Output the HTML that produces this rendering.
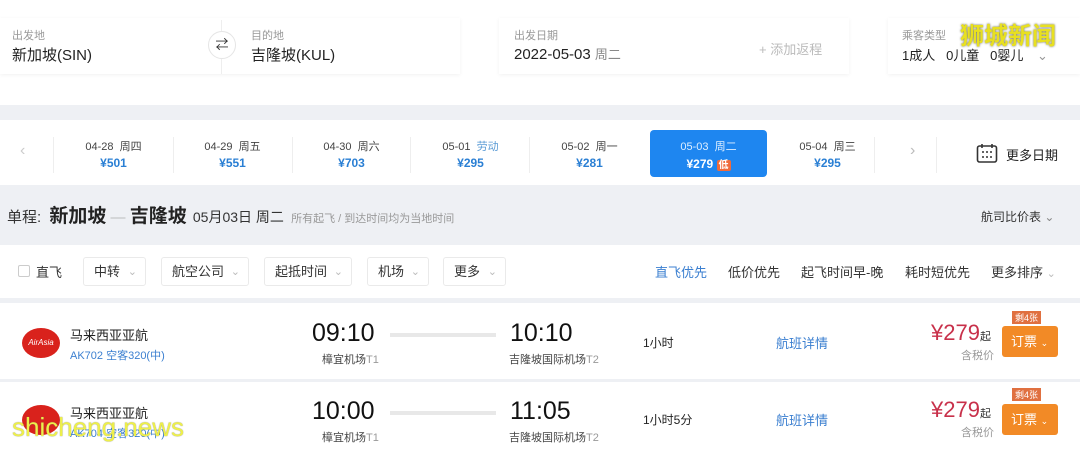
<!DOCTYPE html>
<html><head><meta charset="utf-8"><style>
*{margin:0;padding:0;box-sizing:border-box}
body{width:1080px;height:449px;overflow:hidden;background:#eef0f4;font-family:"Liberation Sans","Noto Sans CJK SC",sans-serif;color:#333;position:relative}
.a{position:absolute;white-space:nowrap}
.card{position:absolute;background:#fff;box-shadow:0 1px 4px rgba(0,0,0,.06)}
.lbl{font-size:11px;color:#999}
.val{font-size:15px;color:#222}
.dc{position:absolute;top:0;height:65px;width:119px;text-align:center}
.dc .d{font-size:11px;color:#444;margin-top:18px}
.dc .p{font-size:12px;color:#2a7fd4;font-weight:bold;margin-top:2px}
.sep{position:absolute;top:17px;width:1px;height:36px;background:#eee}
.chip{position:absolute;top:257px;height:29px;border:1px solid #eaeaea;border-radius:3px;font-size:13px;color:#333;line-height:27px;padding-left:10px;background:#fff}
.chip:after{content:"⌄";color:#bbb;font-size:11px;position:absolute;right:8px;top:1px}
.row{position:absolute;left:0;width:1080px;background:#fff}
</style></head><body>
<div class="a" style="left:0;top:0;width:1080px;height:105px;background:#fff"></div>
<div class="card" style="left:0;top:18px;width:460px;height:56px"></div>
<div class="a lbl" style="left:12px;top:27px">出发地</div>
<div class="a val" style="left:12px;top:44px">新加坡(SIN)</div>
<div class="a" style="left:221px;top:20px;width:1px;height:54px;background:#eee"></div>
<div class="a" style="left:208px;top:31px;width:28px;height:28px;border-radius:50%;background:#fff;border:1px solid #e5e5e5;text-align:center;font-size:13px;line-height:26px;color:#333">⇄</div>
<div class="a lbl" style="left:251px;top:27px">目的地</div>
<div class="a val" style="left:251px;top:44px">吉隆坡(KUL)</div>
<div class="card" style="left:499px;top:18px;width:350px;height:56px"></div>
<div class="a lbl" style="left:514px;top:27px">出发日期</div>
<div class="a val" style="left:514px;top:44px">2022-05-03 <span style="font-size:13px;color:#888">周二</span></div>
<div class="a" style="left:759px;top:39px;font-size:13px;color:#bbb">+ 添加返程</div>
<div class="card" style="left:888px;top:18px;width:192px;height:56px"></div>
<div class="a lbl" style="left:902px;top:27px">乘客类型</div>
<div class="a" style="left:902px;top:45px;font-size:13px;color:#222">1成人&nbsp;&nbsp; 0儿童&nbsp;&nbsp; 0婴儿 <span style="color:#999;margin-left:10px">⌄</span></div>
<div class="a" style="left:960px;top:16px;font-size:24px;color:#e8e020;font-weight:bold;text-shadow:0 0 2px #665">狮城新闻</div>

<div class="a" style="left:0;top:120px;width:1080px;height:65px;background:#fff">
<div class="a" style="left:20px;top:22px;color:#ccc;font-size:16px">‹</div>
<div class="sep" style="left:53px"></div>
<div class="dc" style="left:54px"><div class="d">04-28&nbsp; 周四</div><div class="p">¥501</div></div>
<div class="sep" style="left:173px"></div>
<div class="dc" style="left:173px"><div class="d">04-29&nbsp; 周五</div><div class="p">¥551</div></div>
<div class="sep" style="left:292px"></div>
<div class="dc" style="left:292px"><div class="d">04-30&nbsp; 周六</div><div class="p">¥703</div></div>
<div class="sep" style="left:410px"></div>
<div class="dc" style="left:411px"><div class="d">05-01&nbsp; <span style="color:#5a9bd5">劳动</span></div><div class="p">¥295</div></div>
<div class="sep" style="left:529px"></div>
<div class="dc" style="left:530px"><div class="d">05-02&nbsp; 周一</div><div class="p">¥281</div></div>
<div class="a" style="left:650px;top:10px;width:117px;height:47px;background:#1e86f0;border-radius:4px;text-align:center;color:#fff"><div style="font-size:11px;margin-top:8px;color:#dfefff">05-03&nbsp; 周二</div><div style="font-size:12px;font-weight:bold;margin-top:2px">¥279 <span style="background:#f06b3c;font-size:10px;padding:0 2px;border-radius:2px">低</span></div></div>
<div class="dc" style="left:768px"><div class="d">05-04&nbsp; 周三</div><div class="p">¥295</div></div>
<div class="sep" style="left:874px"></div>
<div class="a" style="left:910px;top:22px;color:#bbb;font-size:16px">›</div>
<div class="sep" style="left:936px"></div>
<svg class="a" style="left:976px;top:23px" width="22" height="20" viewBox="0 0 22 20"><rect x="1.5" y="3" width="19" height="16" rx="2" fill="none" stroke="#333" stroke-width="1.6"/><path d="M6 1v4M16 1v4" stroke="#333" stroke-width="1.6"/><g fill="#333"><circle cx="7" cy="9" r="1"/><circle cx="11" cy="9" r="1"/><circle cx="15" cy="9" r="1"/><circle cx="7" cy="14" r="1"/><circle cx="11" cy="14" r="1"/><circle cx="15" cy="14" r="1"/></g></svg>
<div class="a" style="left:1006px;top:25px;font-size:13px;color:#222">更多日期</div>
</div>

<div class="a" style="left:7px;top:201px;font-size:15px;color:#333">单程: <b style="font-size:19px;color:#222;margin-left:4px">新加坡</b><span style="color:#bbb"> — </span><b style="font-size:19px;color:#222">吉隆坡</b> <span style="font-size:14px;margin-left:2px">05月03日 周二</span> <span style="font-size:11px;color:#999;margin-left:3px">所有起飞 / 到达时间均为当地时间</span></div>
<div class="a" style="left:981px;top:208px;font-size:12px;color:#333">航司比价表 <span style="color:#888">⌄</span></div>

<div class="a" style="left:0;top:245px;width:1080px;height:53px;background:#fff"></div>
<div class="a" style="left:18px;top:265px;width:12px;height:12px;border:1px solid #ccc;border-radius:2px"></div>
<div class="a" style="left:36px;top:262px;font-size:13px">直飞</div>
<div class="chip" style="left:83px;width:63px">中转</div>
<div class="chip" style="left:161px;width:88px">航空公司</div>
<div class="chip" style="left:264px;width:88px">起抵时间</div>
<div class="chip" style="left:367px;width:62px">机场</div>
<div class="chip" style="left:443px;width:63px">更多</div>
<div class="a" style="left:655px;top:262px;font-size:13px;color:#3b7fd0">直飞优先</div>
<div class="a" style="left:728px;top:262px;font-size:13px">低价优先</div>
<div class="a" style="left:801px;top:262px;font-size:13px">起飞时间早-晚</div>
<div class="a" style="left:905px;top:262px;font-size:13px">耗时短优先</div>
<div class="a" style="left:991px;top:262px;font-size:13px">更多排序 <span style="color:#bbb;font-size:11px">⌄</span></div>

<div class="row" style="top:303px;height:76px"></div>
<div class="row" style="top:382px;height:67px"></div>

<div class="a" style="left:22px;top:328px;width:38px;height:30px;border-radius:50%;background:#d9221c;color:#fff;font-size:8px;font-style:italic;text-align:center;line-height:30px">AirAsia</div>
<div class="a" style="left:70px;top:325px;font-size:13px;color:#222">马来西亚亚航</div>
<div class="a" style="left:70px;top:347px;font-size:11px;color:#3b7fd0">AK702 空客320(中)</div>
<div class="a" style="left:312px;top:319px;font-size:25px;color:#111">09:10</div>
<div class="a" style="left:322px;top:351px;font-size:11px;color:#444">樟宜机场<span style="color:#999">T1</span></div>
<div class="a" style="left:390px;top:333px;width:106px;height:4px;background:#e8e8e8"></div>
<div class="a" style="left:510px;top:319px;font-size:25px;color:#111">10:10</div>
<div class="a" style="left:509px;top:351px;font-size:11px;color:#444">吉隆坡国际机场<span style="color:#999">T2</span></div>
<div class="a" style="left:643px;top:334px;font-size:12px;color:#222">1小时</div>
<div class="a" style="left:776px;top:333px;font-size:13px;color:#3b7fd0">航班详情</div>
<div class="a" style="left:931px;top:320px;font-size:22px;color:#c8304a">¥279<span style="font-size:11px;color:#333">起</span></div>
<div class="a" style="left:961px;top:347px;font-size:11px;color:#999">含税价</div>
<div class="a" style="left:1012px;top:311px;font-size:9px;color:#fff;background:#e07040;padding:0 3px">剩4张</div>
<div class="a" style="left:1002px;top:326px;width:56px;height:31px;background:#f28a26;border-radius:3px;color:#fff;font-size:13px;line-height:31px;padding-left:9px">订票 <span style="font-size:9px">⌄</span></div>

<div class="a" style="left:22px;top:405px;width:38px;height:30px;border-radius:50%;background:#d9221c"></div>
<div class="a" style="left:70px;top:403px;font-size:13px;color:#222">马来西亚亚航</div>
<div class="a" style="left:70px;top:425px;font-size:11px;color:#3b7fd0">AK704 空客320(中)</div>
<div class="a" style="left:312px;top:397px;font-size:25px;color:#111">10:00</div>
<div class="a" style="left:322px;top:429px;font-size:11px;color:#444">樟宜机场<span style="color:#999">T1</span></div>
<div class="a" style="left:390px;top:411px;width:106px;height:4px;background:#e8e8e8"></div>
<div class="a" style="left:510px;top:397px;font-size:25px;color:#111">11:05</div>
<div class="a" style="left:509px;top:429px;font-size:11px;color:#444">吉隆坡国际机场<span style="color:#999">T2</span></div>
<div class="a" style="left:643px;top:411px;font-size:12px;color:#222">1小时5分</div>
<div class="a" style="left:776px;top:410px;font-size:13px;color:#3b7fd0">航班详情</div>
<div class="a" style="left:931px;top:397px;font-size:22px;color:#c8304a">¥279<span style="font-size:11px;color:#333">起</span></div>
<div class="a" style="left:961px;top:424px;font-size:11px;color:#999">含税价</div>
<div class="a" style="left:1012px;top:388px;font-size:9px;color:#fff;background:#e07040;padding:0 3px">剩4张</div>
<div class="a" style="left:1002px;top:404px;width:56px;height:31px;background:#f28a26;border-radius:3px;color:#fff;font-size:13px;line-height:31px;padding-left:9px">订票 <span style="font-size:9px">⌄</span></div>
<div class="a" style="left:12px;top:412px;font-size:26px;color:#eef04a;text-shadow:0 0 1px #776">shicheng.news</div>
</body></html>
